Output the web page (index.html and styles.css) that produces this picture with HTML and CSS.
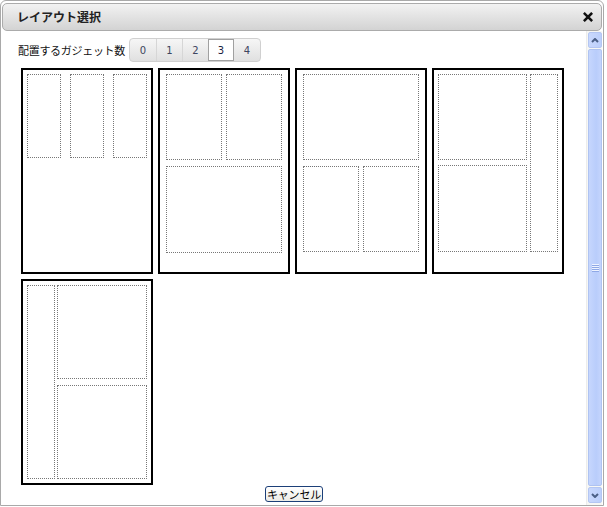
FILE: index.html
```html
<!DOCTYPE html>
<html lang="ja">
<head>
<meta charset="utf-8">
<title>レイアウト選択</title>
<link rel="stylesheet" href="styles.css">
</head>
<body>
<div class="dialog">
  <div class="titlebar">
    <span class="title">レイアウト選択</span>
    <svg class="close" width="10" height="10" viewBox="0 0 10 10"><path d="M1.8 1.8 L8.2 8.2 M8.2 1.8 L1.8 8.2" stroke="#111" stroke-width="2.6" stroke-linecap="square"/></svg>
  </div>
  <div class="body">
    <div class="main">
      <div class="count-row">
        <span class="label">配置するガジェット数</span>
        <div class="seg">
          <span class="seg-btn first">0</span><span class="seg-btn">1</span><span class="seg-btn">2</span><span class="seg-btn active">3</span><span class="seg-btn last">4</span>
        </div>
      </div>
      <div class="thumbs">
        <div class="thumb t1">
          <div class="cell w34 h84"></div><div class="cell w34 h84"></div><div class="cell w34 h84"></div>
        </div>
        <div class="thumb t2">
          <div class="row g4"><div class="cell w56 h86"></div><div class="cell w56 h86"></div></div>
          <div class="cell w116 h87"></div>
        </div>
        <div class="thumb t3">
          <div class="cell w116 h86"></div>
          <div class="row g4"><div class="cell w56 h86"></div><div class="cell w56 h86"></div></div>
        </div>
        <div class="thumb t4">
          <div class="col g5"><div class="cell w89 h86"></div><div class="cell w89 h87"></div></div>
          <div class="cell w28 h178"></div>
        </div>
        <div class="thumb t5">
          <div class="cell w28 h194"></div>
          <div class="col g6"><div class="cell w90 h94"></div><div class="cell w90 h94"></div></div>
        </div>
      </div>
      <div class="footer"><button class="cancel" type="button">キャンセル</button></div>
    </div>
    <div class="scrollbar">
      <div class="sb-btn">
        <svg width="8" height="5" viewBox="0 0 8 5"><path d="M1 4 L4 1 L7 4" fill="none" stroke="#4b5f86" stroke-width="2"/></svg>
      </div>
      <div class="sb-thumb"><span class="grip"></span></div>
      <div class="sb-btn">
        <svg width="8" height="5" viewBox="0 0 8 5"><path d="M1 1 L4 4 L7 1" fill="none" stroke="#4b5f86" stroke-width="2"/></svg>
      </div>
    </div>
  </div>
</div>
</body>
</html>
```

FILE: styles.css
```css
html, body {
  margin: 0;
  padding: 0;
  background: #fff;
}

body {
  font-family: "Noto Sans CJK JP", "DejaVu Sans", sans-serif;
  color: #111;
}

.dialog {
  width: 604px;
  height: 506px;
  box-sizing: border-box;
  border: 1px solid #a9a9a9;
  border-radius: 6px 6px 0 0;
  padding: 2px 1px 0 1px;
  display: flex;
  flex-direction: column;
}

.titlebar {
  height: 28px;
  box-sizing: border-box;
  border: 1px solid #ababab;
  border-radius: 5px;
  background: linear-gradient(#f2f2f2, #d3d3d3);
  display: flex;
  align-items: center;
  justify-content: space-between;
  padding: 0 8px 0 14px;
}

.title {
  font-size: 12px;
  font-weight: bold;
  color: #222;
  line-height: 1;
}

.close {
  display: block;
}

.body {
  flex: 1;
  display: flex;
  min-height: 0;
}

.main {
  flex: 1;
  display: flex;
  flex-direction: column;
}

.count-row {
  display: flex;
  align-items: center;
  height: 24px;
  margin: 7px 0 0 16px;
}

.label {
  font-size: 11px;
  letter-spacing: -0.3px;
  width: 107px;
  margin-right: 4px;
  white-space: nowrap;
  line-height: 1;
  color: #111;
}

.seg {
  display: flex;
  height: 24px;
  border: 1px solid #d0d0d0;
  border-radius: 4px;
  box-sizing: border-box;
  overflow: hidden;
  background: linear-gradient(#f6f6f6, #e0e0e0);
}

.seg-btn {
  width: 26px;
  display: flex;
  align-items: center;
  justify-content: center;
  font-family: "DejaVu Sans", sans-serif;
  font-size: 10px;
  color: #3d4660;
  border-left: 1px solid #d6d6d6;
  box-sizing: border-box;
}

.seg-btn.first {
  border-left: none;
}

.seg-btn.active {
  background: #fff;
  border: 1px solid #a0a0a0;
  color: #1a2240;
}

.seg-btn.active + .seg-btn {
  border-left: none;
}

.thumbs {
  display: flex;
  flex-wrap: wrap;
  gap: 5px;
  width: 560px;
  margin: 6px 0 0 19px;
}

.thumb {
  width: 132px;
  height: 206px;
  box-sizing: border-box;
  border: 2px solid #000;
  padding: 4px;
  display: flex;
  align-items: flex-start;
}

.t1 {
  gap: 9px;
}

.t2, .t3 {
  flex-direction: column;
  gap: 6px;
  padding: 4px 6px;
}

.t4 {
  gap: 3px;
}

.t5 {
  gap: 2px;
}

.row {
  display: flex;
}

.col {
  display: flex;
  flex-direction: column;
}

.g4 { gap: 4px; }
.g5 { gap: 5px; }
.g6 { gap: 6px; }

.cell {
  box-sizing: border-box;
  border: 1px dotted #777;
}

.w28 { width: 28px; }
.w34 { width: 34px; }
.w56 { width: 56px; }
.w89 { width: 89px; }
.w90 { width: 90px; }
.w116 { width: 116px; }
.h84 { height: 84px; }
.h86 { height: 86px; }
.h87 { height: 87px; }
.h94 { height: 94px; }
.h178 { height: 178px; }
.h194 { height: 194px; }

.footer {
  display: flex;
  justify-content: center;
  margin-top: 1px;
}

.cancel {
  height: 16px;
  padding: 0 1px;
  margin: 0;
  font-family: "Noto Sans CJK JP", sans-serif;
  font-size: 11px;
  letter-spacing: -0.2px;
  line-height: 14px;
  color: #000;
  border: 1px solid #1c3f78;
  border-radius: 3px;
  background: linear-gradient(#ffffff, #ecebe6);
}

.scrollbar {
  width: 16px;
  box-sizing: border-box;
  border-left: 1px solid #ececec;
  background: #f7f7f4;
  display: flex;
  flex-direction: column;
  gap: 1px;
  padding: 1px 0 2px 1px;
}

.sb-btn {
  height: 16px;
  box-sizing: border-box;
  border: 1px solid #b4c6f2;
  border-radius: 2px;
  background: linear-gradient(90deg, #c9d8fd, #bccffb);
  display: flex;
  align-items: center;
  justify-content: center;
}

.sb-thumb {
  flex: 1;
  box-sizing: border-box;
  border: 1px solid #afc3f1;
  border-radius: 2px;
  background: linear-gradient(90deg, #c6d6fd, #b9cdfb 60%, #c4d4fc);
  display: flex;
  align-items: center;
  justify-content: center;
}

.grip {
  width: 7px;
  height: 8px;
  background: repeating-linear-gradient(#eef3ff 0 1px, #8fa8e6 1px 2px);
}
```
